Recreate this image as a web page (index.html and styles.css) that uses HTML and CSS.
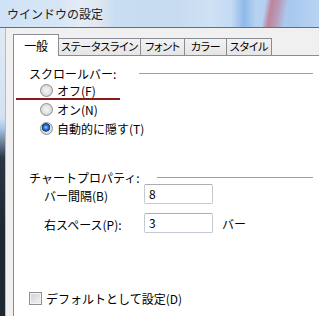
FILE: index.html
```html
<!DOCTYPE html>
<html lang="ja">

<head>
    <meta charset="UTF-8">
    <meta name="viewport" content="width=device-width, initial-scale=1.0">
    <title>ウインドウの設定</title>
    <link rel="stylesheet" href="styles.css">
</head>

<body>
    <div class="window">
        <div class="titlebar">ウインドウの設定</div>
        <div class="main">
            <div class="frame"></div>
            <div class="dialog">
                <div class="tabs">
                    <div class="tab active tab-general">一般</div>
                    <div class="tab tab-status">ステータスライン</div>
                    <div class="tab tab-font">フォント</div>
                    <div class="tab tab-color">カラー</div>
                    <div class="tab tab-style">スタイル</div>
                </div>
                <div class="panel">
                    <div class="group-head scroll-head">
                        <span>スクロールバー:</span>
                        <span class="rule"></span>
                    </div>
                    <div class="options">
                        <label class="option"><span class="radio"></span>オフ(F)</label>
                        <div class="underline"></div>
                        <label class="option"><span class="radio"></span>オン(N)</label>
                        <label class="option"><span class="radio checked"></span>自動的に隠す(T)</label>
                    </div>

                    <div class="group-head chart-head">
                        <span>チャートプロパティ:</span>
                        <span class="rule"></span>
                    </div>
                    <div class="fields">
                        <div class="field">
                            <span class="field-label">バー間隔(B)</span>
                            <div class="textbox">8</div>
                        </div>
                        <div class="field">
                            <span class="field-label">右スペース(P):</span>
                            <div class="textbox">3</div>
                            <span class="unit">バー</span>
                        </div>
                    </div>

                    <label class="default-check"><span class="checkbox"></span>デフォルトとして設定(D)</label>
                </div>
            </div>
        </div>
    </div>
</body>

</html>
```

FILE: styles.css
```css
* {
    box-sizing: border-box;
}

body {
    margin: 0;
    width: 319px;
    height: 316px;
    overflow: hidden;
    font-family: "Noto Sans CJK JP", "Liberation Sans", sans-serif;
    font-size: 12px;
    color: #000;
    background-color: #f0f0f0;
}

.window {
    height: 316px;
    display: flex;
    flex-direction: column;
}

.titlebar {
    height: 28px;
    padding-left: 7px;
    line-height: 27px;
    font-size: 12px;
    color: #1a1a1a;
    border-bottom: 1px solid #5f6f80;
    background:
        linear-gradient(100deg, transparent 0, transparent 262px, rgba(200, 70, 90, 0.55) 268px, rgba(200, 70, 90, 0.35) 276px, transparent 284px),
        linear-gradient(90deg, #cfe2f5 0, #d6e6f6 60px, #e4ecf5 80px, #dfe6ef 100px, #c9ddf2 115px, #c6daf0 170px, #cfe1f4 210px, #c2daf3 232px, #8fb9e8 244px, #b7d3f1 256px, #a9c8ee 290px, #b8d4f2 319px);
}

.main {
    flex: 1;
    display: flex;
}

.frame {
    width: 6px;
    border-right: 1px solid #b8bcc2;
    background: linear-gradient(180deg, #dfe9f4 0, #d3e2f2 90px, #a8c6e6 100px, #2a3644 130px, #1d2731 200px, #1e2830 288px);
}

.dialog {
    flex: 1;
    padding: 6px 0 0 7px;
    display: flex;
    flex-direction: column;
}

.tabs {
    display: flex;
    align-items: flex-end;
    height: 21px;
    font-size: 11px;
    letter-spacing: -0.3px;
    font-feature-settings: "palt";
}

.tab {
    flex-shrink: 0;
    height: 17px;
    line-height: 15px;
    text-align: center;
    white-space: nowrap;
    border: 1px solid #898c95;
    border-bottom: none;
    background: linear-gradient(#f2f2f2, #e5e5e5);
    margin-left: -1px;
}

.tab.active {
    height: 22px;
    margin-bottom: -1px;
    margin-left: 0;
    line-height: 21px;
    font-size: 12px;
    background: #fff;
    position: relative;
    z-index: 1;
}

.tab-general {
    width: 46px;
}

.tab-status {
    width: 83px;
}

.tab-font {
    width: 45px;
}

.tab-color {
    width: 43px;
}

.tab-style {
    width: 46px;
}

.panel {
    flex: 1;
    background: #fff;
    border-left: 1px solid #898c95;
    border-top: 1px solid #898c95;
    padding: 10px 6px 0 15px;
    display: flex;
    flex-direction: column;
}

.group-head {
    display: flex;
    align-items: center;
    height: 14px;
}

.rule {
    flex: 1;
    height: 1px;
    background: #a0a0a0;
}

.scroll-head .rule {
    margin-left: 23px;
}

.chart-head .rule {
    margin-left: 17px;
}

.options {
    padding: 1px 0 0 11px;
    display: flex;
    flex-direction: column;
}

.option {
    display: flex;
    align-items: center;
    height: 19px;
}

.underline {
    height: 2px;
    background: #8b1a1a;
    margin: -2px 0 0 -24px;
    width: 104px;
}

.radio {
    width: 13px;
    height: 13px;
    margin-right: 4px;
    border-radius: 50%;
    border: 1px solid #8f9091;
    background: radial-gradient(circle at 50% 50%, #f6f6f6 0, #e2e2e2 4px, #cfcfcf 6px);
}

.radio.checked {
    background:
        radial-gradient(circle at 45% 40%, #9fd1ff 0, #2a7ad6 2px, #0d3f88 4px, transparent 4.5px),
        radial-gradient(circle at 50% 50%, #f6f6f6 0, #e2e2e2 4px, #cfcfcf 6px);
}

.chart-head {
    margin-top: 32px;
}

.fields {
    padding: 0 0 0 15px;
}

.field {
    display: flex;
    align-items: center;
    height: 20px;
    margin-top: 9px;
}

.field:first-child {
    margin-top: 0;
}

.field-label {
    width: 100px;
    padding-top: 3px;
}

.textbox {
    width: 69px;
    height: 20px;
    padding-left: 4px;
    line-height: 18px;
    border: 1px solid #c5cad2;
    border-top-color: #abadb3;
    border-radius: 2px;
    background: #fff;
}

.unit {
    margin-left: 9px;
}

.default-check {
    margin-top: 57px;
    display: flex;
    align-items: center;
    height: 16px;
}

.checkbox {
    width: 13px;
    height: 13px;
    margin-right: 4px;
    border: 1px solid #8f8f8f;
    background: linear-gradient(135deg, #d0d0d0, #f4f4f4);
    box-shadow: inset 0 0 0 1px #f4f4f4;
}
```
